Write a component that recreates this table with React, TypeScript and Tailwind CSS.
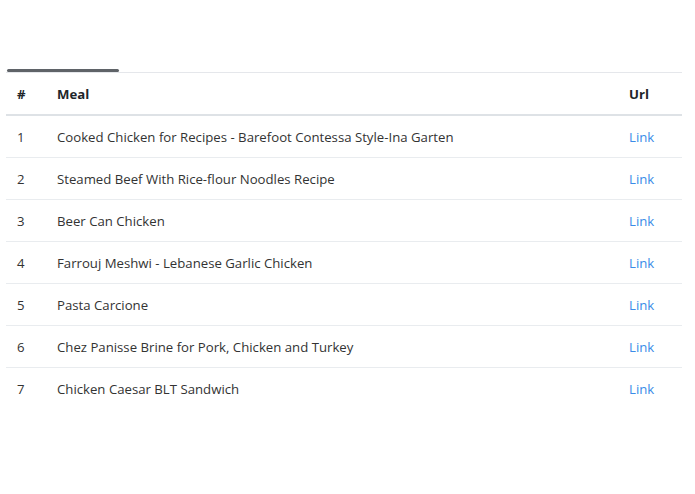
import React from 'react';

const meals = [
  'Cooked Chicken for Recipes - Barefoot Contessa Style-Ina Garten',
  'Steamed Beef With Rice-flour Noodles Recipe',
  'Beer Can Chicken',
  'Farrouj Meshwi - Lebanese Garlic Chicken',
  'Pasta Carcione',
  'Chez Panisse Brine for Pork, Chicken and Turkey',
  'Chicken Caesar BLT Sandwich',
];

export default function App() {
  return (
    <div className="w-[695px] h-[494px] bg-white pt-[69px] px-[6px]" style={{ fontFamily: '"Open Sans", sans-serif' }}>
      <div className="w-[676px]">
        <div className="h-[3px] w-[112px] ml-[1px] bg-[#5f6368] rounded-full" />
        <table className="w-full border-collapse text-[13.2px] leading-[20px] text-[#333]">
          <thead>
            <tr className="border-t border-[#e5e7eb] border-b-2 border-b-[#dee2e6]">
              <th className="w-[39px] pl-[11px] pt-[11px] pb-[10px] text-left font-bold text-[#212529]">#</th>
              <th className="pl-[12px] pt-[11px] pb-[10px] text-left font-bold text-[#212529]">Meal</th>
              <th className="w-[65px] pl-[12px] pt-[11px] pb-[10px] text-left font-bold text-[#212529]">Url</th>
            </tr>
          </thead>
          <tbody>
            {meals.map((m, i) => (
              <tr key={i} className={i < meals.length - 1 ? 'border-b border-[#e9ecef]' : ''}>
                <td className="pl-[11px] pt-[2px] h-[42px]">{i + 1}</td>
                <td className="pl-[12px] pt-[2px] h-[42px]">{m}</td>
                <td className="pl-[12px] pt-[2px] h-[42px] text-[#3b8ce8]">Link</td>
              </tr>
            ))}
          </tbody>
        </table>
      </div>
    </div>
  );
}
